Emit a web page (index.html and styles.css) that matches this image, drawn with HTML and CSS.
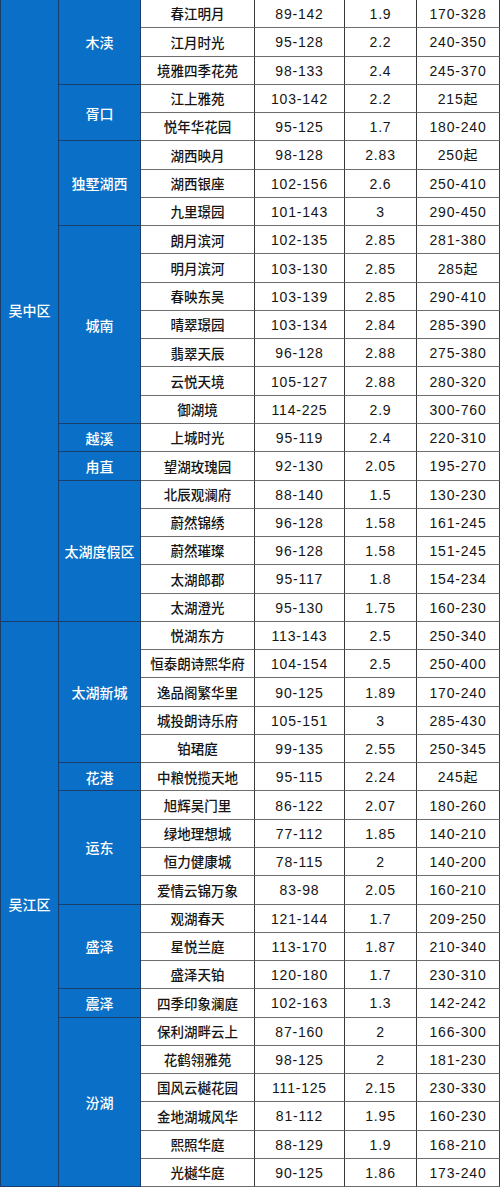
FILE: index.html
```html
<!DOCTYPE html>
<html lang="zh-CN">
<head>
<meta charset="utf-8">
<title>楼盘表</title>
<link rel="stylesheet" href="styles.css">
</head>
<body>
<div class="grid">
  <div class="c dist s22">吴中区</div>
  <div class="c sub s3">木渎</div>
  <div class="c name">春江明月</div><div class="c num">89-142</div><div class="c num">1.9</div><div class="c num">170-328</div>
  <div class="c name">江月时光</div><div class="c num">95-128</div><div class="c num">2.2</div><div class="c num">240-350</div>
  <div class="c name">境雅四季花苑</div><div class="c num">98-133</div><div class="c num">2.4</div><div class="c num">245-370</div>
  <div class="c sub s2">胥口</div>
  <div class="c name">江上雅苑</div><div class="c num">103-142</div><div class="c num">2.2</div><div class="c num">215起</div>
  <div class="c name">悦年华花园</div><div class="c num">95-125</div><div class="c num">1.7</div><div class="c num">180-240</div>
  <div class="c sub s3">独墅湖西</div>
  <div class="c name">湖西映月</div><div class="c num">98-128</div><div class="c num">2.83</div><div class="c num">250起</div>
  <div class="c name">湖西银座</div><div class="c num">102-156</div><div class="c num">2.6</div><div class="c num">250-410</div>
  <div class="c name">九里璟园</div><div class="c num">101-143</div><div class="c num">3</div><div class="c num">290-450</div>
  <div class="c sub s7">城南</div>
  <div class="c name">朗月滨河</div><div class="c num">102-135</div><div class="c num">2.85</div><div class="c num">281-380</div>
  <div class="c name">明月滨河</div><div class="c num">103-130</div><div class="c num">2.85</div><div class="c num">285起</div>
  <div class="c name">春映东吴</div><div class="c num">103-139</div><div class="c num">2.85</div><div class="c num">290-410</div>
  <div class="c name">晴翠璟园</div><div class="c num">103-134</div><div class="c num">2.84</div><div class="c num">285-390</div>
  <div class="c name">翡翠天辰</div><div class="c num">96-128</div><div class="c num">2.88</div><div class="c num">275-380</div>
  <div class="c name">云悦天境</div><div class="c num">105-127</div><div class="c num">2.88</div><div class="c num">280-320</div>
  <div class="c name">御湖境</div><div class="c num">114-225</div><div class="c num">2.9</div><div class="c num">300-760</div>
  <div class="c sub s1">越溪</div>
  <div class="c name">上城时光</div><div class="c num">95-119</div><div class="c num">2.4</div><div class="c num">220-310</div>
  <div class="c sub s1">甪直</div>
  <div class="c name">望湖玫瑰园</div><div class="c num">92-130</div><div class="c num">2.05</div><div class="c num">195-270</div>
  <div class="c sub s5">太湖度假区</div>
  <div class="c name">北辰观澜府</div><div class="c num">88-140</div><div class="c num">1.5</div><div class="c num">130-230</div>
  <div class="c name">蔚然锦绣</div><div class="c num">96-128</div><div class="c num">1.58</div><div class="c num">161-245</div>
  <div class="c name">蔚然璀璨</div><div class="c num">96-128</div><div class="c num">1.58</div><div class="c num">151-245</div>
  <div class="c name">太湖郎郡</div><div class="c num">95-117</div><div class="c num">1.8</div><div class="c num">154-234</div>
  <div class="c name">太湖澄光</div><div class="c num">95-130</div><div class="c num">1.75</div><div class="c num">160-230</div>

  <div class="c dist s20">吴江区</div>
  <div class="c sub s5">太湖新城</div>
  <div class="c name">悦湖东方</div><div class="c num">113-143</div><div class="c num">2.5</div><div class="c num">250-340</div>
  <div class="c name">恒泰朗诗熙华府</div><div class="c num">104-154</div><div class="c num">2.5</div><div class="c num">250-400</div>
  <div class="c name">逸品阁繁华里</div><div class="c num">90-125</div><div class="c num">1.89</div><div class="c num">170-240</div>
  <div class="c name">城投朗诗乐府</div><div class="c num">105-151</div><div class="c num">3</div><div class="c num">285-430</div>
  <div class="c name">铂珺庭</div><div class="c num">99-135</div><div class="c num">2.55</div><div class="c num">250-345</div>
  <div class="c sub s1">花港</div>
  <div class="c name">中粮悦揽天地</div><div class="c num">95-115</div><div class="c num">2.24</div><div class="c num">245起</div>
  <div class="c sub s4">运东</div>
  <div class="c name">旭辉吴门里</div><div class="c num">86-122</div><div class="c num">2.07</div><div class="c num">180-260</div>
  <div class="c name">绿地理想城</div><div class="c num">77-112</div><div class="c num">1.85</div><div class="c num">140-210</div>
  <div class="c name">恒力健康城</div><div class="c num">78-115</div><div class="c num">2</div><div class="c num">140-200</div>
  <div class="c name">爱情云锦万象</div><div class="c num">83-98</div><div class="c num">2.05</div><div class="c num">160-210</div>
  <div class="c sub s3">盛泽</div>
  <div class="c name">观湖春天</div><div class="c num">121-144</div><div class="c num">1.7</div><div class="c num">209-250</div>
  <div class="c name">星悦兰庭</div><div class="c num">113-170</div><div class="c num">1.87</div><div class="c num">210-340</div>
  <div class="c name">盛泽天铂</div><div class="c num">120-180</div><div class="c num">1.7</div><div class="c num">230-310</div>
  <div class="c sub s1">震泽</div>
  <div class="c name">四季印象澜庭</div><div class="c num">102-163</div><div class="c num">1.3</div><div class="c num">142-242</div>
  <div class="c sub s6">汾湖</div>
  <div class="c name">保利湖畔云上</div><div class="c num">87-160</div><div class="c num">2</div><div class="c num">166-300</div>
  <div class="c name">花鹤翎雅苑</div><div class="c num">98-125</div><div class="c num">2</div><div class="c num">181-230</div>
  <div class="c name">国风云樾花园</div><div class="c num">111-125</div><div class="c num">2.15</div><div class="c num">230-330</div>
  <div class="c name">金地湖城风华</div><div class="c num">81-112</div><div class="c num">1.95</div><div class="c num">160-230</div>
  <div class="c name">熙照华庭</div><div class="c num">88-129</div><div class="c num">1.9</div><div class="c num">168-210</div>
  <div class="c name">光樾华庭</div><div class="c num">90-125</div><div class="c num">1.86</div><div class="c num">173-240</div>
</div>
</body>
</html>
```

FILE: styles.css
```css
html, body {
  margin: 0;
  padding: 0;
  background: #ffffff;
}

.grid {
  display: grid;
  width: 500px;
  box-sizing: border-box;
  border-left: 1px solid #1b3d6b;
  grid-template-columns: 58px 82px 114px 90px 72px 83px;
  grid-template-rows: repeat(42, 28.27px);
  font-family: "Noto Sans CJK SC", "Liberation Sans", sans-serif;
  font-size: 13.5px;
  font-weight: 500;
  color: #151515;
}

.c {
  box-sizing: border-box;
  display: flex;
  align-items: center;
  justify-content: center;
  border-right: 1px solid #3a3a3a;
  border-bottom: 1px solid #6e6e6e;
  white-space: nowrap;
  line-height: 1;
}

.dist, .sub {
  background: #0a6fc6;
  color: #ffffff;
  font-size: 14px;
  border-right-color: #1b3d6b;
  border-bottom-color: #1b3d6b;
}

.name {
  padding-top: 1px;
}

.num {
  font-family: "Liberation Sans", "Noto Sans CJK SC", sans-serif;
  font-size: 14px;
  font-weight: 400;
  letter-spacing: 0.8px;
  padding-top: 1px;
}

.s1 { grid-row: span 1; }
.s2 { grid-row: span 2; }
.s3 { grid-row: span 3; }
.s4 { grid-row: span 4; }
.s5 { grid-row: span 5; }
.s6 { grid-row: span 6; }
.s7 { grid-row: span 7; }
.s20 { grid-row: span 20; }
.s22 { grid-row: span 22; }
```
